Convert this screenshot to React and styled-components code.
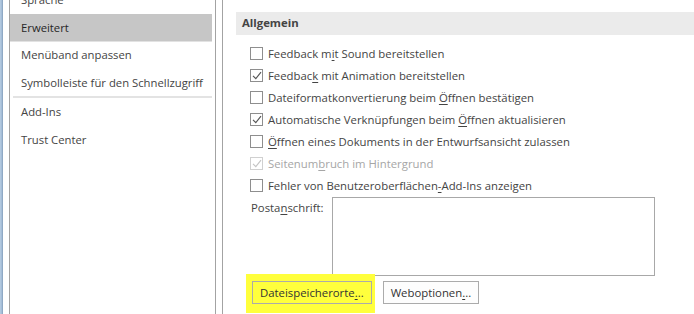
import React from 'react';
import styled, { createGlobalStyle } from 'styled-components';

const GlobalStyle = createGlobalStyle`
  html, body { margin: 0; padding: 0; background: #fff; }
  body { font-family: "Segoe UI", "Open Sans", sans-serif; font-size: 11.35px; color: #444; }
`;

const Window = styled.div`
  display: flex;
  width: 694px;
  height: 314px;
  overflow: hidden;
  background: #fff;
`;

const Edge = styled.div`
  width: 3px;
  flex: none;
  background: linear-gradient(to right, #b7cde3 0, #9fb9d4 2px, #7f99b5 3px);
`;

const Sidebar = styled.nav`
  width: 207px;
  flex: none;
  margin-left: 6px;
  border-left: 1px solid #a3a3a3;
  border-right: 1px solid #a3a3a3;
  padding-right: 3px;
  box-sizing: border-box;
`;

const NavList = styled.ul`
  list-style: none;
  margin: -14px 0 0;
  padding: 0;
`;

const NavItem = styled.li`
  height: 27.5px;
  line-height: 27px;
  padding-left: 11px;
  font-size: 11.3px;
  white-space: nowrap;
  color: ${p => (p.$active ? '#262626' : '#444')};
  background: ${p => (p.$active ? '#c6c6c6' : 'transparent')};
  box-shadow: ${p => (p.$active ? '0 1px 0 #e2e2e2' : 'none')};
`;

const NavSep = styled.li`
  height: 2px;
  margin: 0 0 0 3px;
  background: #e3e3e3;
`;

const Main = styled.main`
  flex: 1;
  margin-left: 6px;
  border-left: 1px solid #a3a3a3;
  padding: 12px 0 0 13px;
`;

const SectionHead = styled.div`
  height: 23px;
  line-height: 22px;
  padding-left: 6px;
  background: #ebebeb;
  font-weight: bold;
  color: #444;
`;

const Options = styled.div`
  display: flex;
  flex-direction: column;
  padding: 7px 0 0 14px;
`;

const Row = styled.label`
  display: flex;
  align-items: center;
  height: 22px;
  gap: 5px;
  white-space: nowrap;
  color: ${p => (p.$disabled ? '#a6a6a6' : '#444')};
`;

const Box = styled.span`
  width: 11px;
  height: 11px;
  flex: none;
  border: 1px solid ${p => (p.$disabled ? '#d0d0d0' : '#8e8e8e')};
  background: #fff;
  display: flex;
  align-items: center;
  justify-content: center;
`;

const Key = styled.span`
  text-decoration: underline;
  text-underline-offset: 2px;
`;

const AddressRow = styled.div`
  display: flex;
  align-items: flex-start;
  margin-top: 1px;
  padding-left: 1px;
`;

const FieldLabel = styled.div`
  width: 81px;
  padding-top: 3px;
  white-space: nowrap;
`;

const TextArea = styled.div`
  width: 321px;
  height: 77px;
  border: 1px solid #a8a8a8;
`;

const ButtonRow = styled.div`
  display: flex;
  align-items: flex-start;
  gap: 11px;
  margin-top: 5px;
  padding-left: 2px;
`;

const Highlight = styled.div`
  background: #ffff3c;
  padding: 7px 3px 9px 6px;
  margin: -7px -3px -9px -6px;
`;

const Button = styled.button`
  font: inherit;
  color: #333;
  height: 23px;
  padding: 0 7px;
  border: 1px solid #ababab;
  background: ${p => (p.$plain ? '#fdfdfd' : 'transparent')};
  white-space: nowrap;
`;

const Check = ({ disabled }) => (
  <svg width="10" height="9" viewBox="0 0 10 9">
    <path d="M1 4.8 L3.8 7.6 L9 1.2" fill="none" stroke={disabled ? '#c4c4c4' : '#555'} strokeWidth="1.1" />
  </svg>
);

const Option = ({ checked, disabled, children }) => (
  <Row $disabled={disabled}>
    <Box $disabled={disabled}>{checked && <Check disabled={disabled} />}</Box>
    <span>{children}</span>
  </Row>
);

export default function App() {
  return (
    <>
      <GlobalStyle />
      <Window>
        <Edge />
        <Sidebar>
          <NavList>
            <NavItem>Sprache</NavItem>
            <NavItem $active>Erweitert</NavItem>
            <NavItem>Menüband anpassen</NavItem>
            <NavItem>Symbolleiste für den Schnellzugriff</NavItem>
            <NavSep />
            <NavItem>Add-Ins</NavItem>
            <NavItem>Trust Center</NavItem>
          </NavList>
        </Sidebar>
        <Main>
          <SectionHead>Allgemein</SectionHead>
          <Options>
            <Option>Feedback m<Key>i</Key>t Sound bereitstellen</Option>
            <Option checked>Feedbac<Key>k</Key> mit Animation bereitstellen</Option>
            <Option>Dateiformatkonvertierung beim <Key>Ö</Key>ffnen bestätigen</Option>
            <Option checked>Automatische Verknüpfungen beim <Key>Ö</Key>ffnen aktualisieren</Option>
            <Option><Key>Ö</Key>ffnen eines Dokuments in der Entwurfsansicht zulassen</Option>
            <Option checked disabled>Seitenum<Key>b</Key>ruch im Hintergrund</Option>
            <Option>Fehler von Benutzeroberflächen<Key>-</Key>Add-Ins anzeigen</Option>
            <AddressRow>
              <FieldLabel>Posta<Key>n</Key>schrift:</FieldLabel>
              <TextArea />
            </AddressRow>
            <ButtonRow>
              <Highlight>
                <Button>Dateispeicherorte<Key>.</Key>..</Button>
              </Highlight>
              <Button $plain>Weboptionen<Key>.</Key>..</Button>
            </ButtonRow>
          </Options>
        </Main>
      </Window>
    </>
  );
}
